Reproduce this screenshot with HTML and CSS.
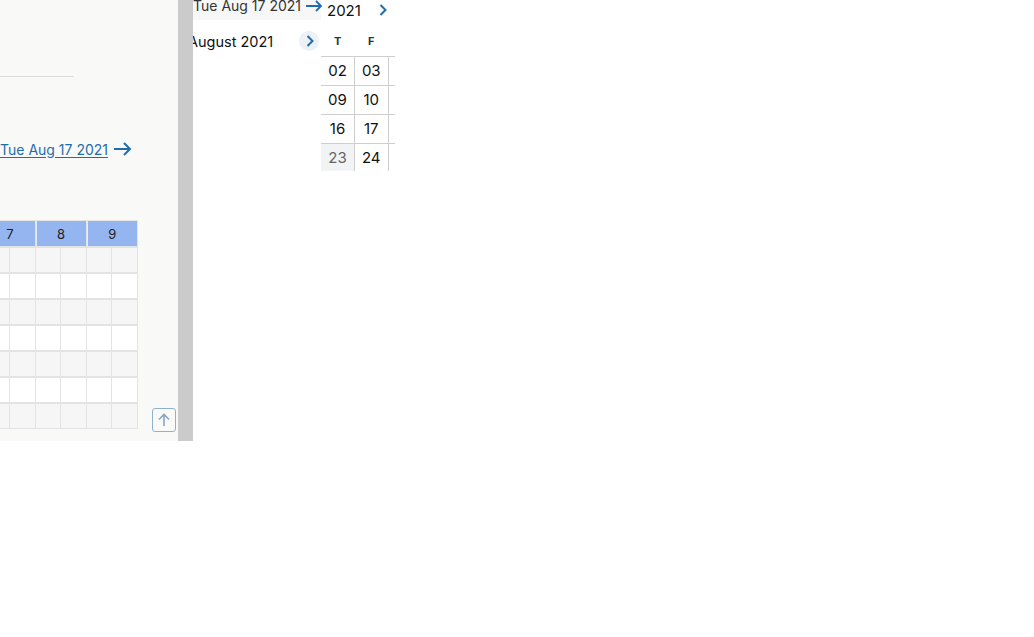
FILE: index.html
```html
<!DOCTYPE html>
<html>
<head>
<meta charset="utf-8">
<link rel="stylesheet" href="styles.css">
</head>
<body>
<div class="page">
  <div class="left">
    <div class="rule"></div>
    <div class="link-row">
      <a class="date-link" href="#">Tue Aug 17 2021</a>
      <svg class="arrow" width="19" height="16" viewBox="0 0 19 16"><path d="M1 8 H17 M11 2 L17 8 L11 14" fill="none" stroke="#1f6dac" stroke-width="2"/></svg>
    </div>
    <div class="grid-row">
      <div class="grid">
        <div class="hcell">6</div><div class="hcell">7</div><div class="hcell">8</div><div class="hcell">9</div>
        <div class="c g"></div><div class="c g"></div><div class="c g"></div><div class="c g"></div><div class="c g"></div><div class="c g"></div><div class="c g"></div><div class="c g"></div>
        <div class="c w"></div><div class="c w"></div><div class="c w"></div><div class="c w"></div><div class="c w"></div><div class="c w"></div><div class="c w"></div><div class="c w"></div>
        <div class="c g"></div><div class="c g"></div><div class="c g"></div><div class="c g"></div><div class="c g"></div><div class="c g"></div><div class="c g"></div><div class="c g"></div>
        <div class="c w"></div><div class="c w"></div><div class="c w"></div><div class="c w"></div><div class="c w"></div><div class="c w"></div><div class="c w"></div><div class="c w"></div>
        <div class="c g"></div><div class="c g"></div><div class="c g"></div><div class="c g"></div><div class="c g"></div><div class="c g"></div><div class="c g"></div><div class="c g"></div>
        <div class="c w"></div><div class="c w"></div><div class="c w"></div><div class="c w"></div><div class="c w"></div><div class="c w"></div><div class="c w"></div><div class="c w"></div>
        <div class="c g"></div><div class="c g"></div><div class="c g"></div><div class="c g"></div><div class="c g"></div><div class="c g"></div><div class="c g"></div><div class="c g"></div>
      </div>
      <button class="up" type="button">
        <svg width="16" height="16" viewBox="0 0 16 16"><path d="M8 14 V2.5 M3 7.5 L8 2.5 L13 7.5" fill="none" stroke="#84a6c6" stroke-width="1.6"/></svg>
      </button>
    </div>
  </div>
  <div class="divider"></div>
  <div class="right">
    <div class="col1">
      <div class="topbar">
        <span class="top-date">Tue Aug 17 2021</span>
        <svg class="top-arrow" width="18" height="12" viewBox="0 0 18 12"><path d="M1 6 H16 M11 1 L16 6 L11 11" fill="none" stroke="#1f6dac" stroke-width="1.8"/></svg>
      </div>
      <div class="month-row">
        <span class="month">August 2021</span>
        <span class="chev-circle"><svg width="8" height="12" viewBox="0 0 8 12"><path d="M1.5 1 L6.5 6 L1.5 11" fill="none" stroke="#1f6dac" stroke-width="2"/></svg></span>
      </div>
    </div>
    <div class="col2">
      <div class="year-row">
        <span class="year">2021</span>
        <svg class="year-chev" width="8" height="12" viewBox="0 0 8 12"><path d="M1.5 1 L6.5 6 L1.5 11" fill="none" stroke="#1f6dac" stroke-width="2"/></svg>
      </div>
      <table class="cal">
        <thead><tr><th>T</th><th>F</th><th></th></tr></thead>
        <tbody>
          <tr><td>02</td><td>03</td><td></td></tr>
          <tr><td>09</td><td>10</td><td></td></tr>
          <tr><td>16</td><td>17</td><td></td></tr>
          <tr><td class="muted">23</td><td>24</td><td></td></tr>
        </tbody>
      </table>
    </div>
  </div>
</div>
</body>
</html>
```
FILE: styles.css
```css
* { box-sizing: border-box; }
html, body { margin: 0; padding: 0; background: #fff; }
body { font-family: Inter, "Open Sans", sans-serif; color: #111; }

.page { display: flex; height: 441px; }

.left {
  width: 178px;
  background: #f9f9f7;
  overflow: hidden;
  display: flex;
  flex-direction: column;
}
.rule { margin-top: 76px; width: 74px; height: 1px; background: #dcdcdc; }

.link-row { display: flex; align-items: center; margin-top: 62px; height: 20px; }
.date-link {
  color: #1f6dac;
  font-size: 14px;
  text-decoration: underline;
  text-underline-offset: 2px;
  white-space: nowrap;
}
.arrow { margin-left: 5px; }

.grid-row { display: flex; align-items: flex-end; margin-top: 61px; }
.grid {
  width: 206px;
  margin-left: -68px;
  flex: none;
  display: grid;
  grid-template-columns: repeat(8, 1fr);
  grid-template-rows: 25px repeat(7, 24px);
  column-gap: 1px;
  row-gap: 2px;
  padding: 1px;
  background: #e3e3e3;
}
.hcell {
  grid-column: span 2;
  background: #94b5ef;
  font-size: 13px;
  color: #222;
  display: flex;
  align-items: center;
  justify-content: center;
  border-left: 1px solid #e6ecf7;
}
.c.g { background: #f6f6f6; }
.c.w { background: #ffffff; }

.up {
  width: 24px;
  height: 24px;
  margin-left: 14px;
  margin-bottom: -3px;
  padding: 0;
  border: 1px solid #8fb0ce;
  border-radius: 3px;
  background: #f9f9f7;
  display: flex;
  align-items: center;
  justify-content: center;
}

.divider { width: 15px; background: #cbcbcb; flex: none; }

.right { display: flex; overflow: hidden; align-items: flex-start; }

.col1 { width: 128px; flex: none; }
.topbar {
  height: 20px;
  background: #f7f7f7;
  display: flex;
  align-items: flex-start;
  justify-content: space-between;
}
.top-date {
  font-size: 14px;
  color: #333;
  line-height: 14px;
  margin-top: -1px;
  white-space: nowrap;
}
.top-arrow { margin-right: -2px; }

.month-row {
  display: flex;
  align-items: center;
  justify-content: space-between;
  margin-top: 11px;
  height: 20px;
  padding-right: 2px;
}
.month { font-size: 14.5px; margin-left: -5px; color: #111; white-space: nowrap; }
.chev-circle {
  width: 20px; height: 20px;
  border-radius: 50%;
  background: #edf1f5;
  display: flex; align-items: center; justify-content: center;
  padding-left: 1px;
}

.col2 { width: 74px; flex: none; overflow: hidden; }
.year-row { display: flex; align-items: center; justify-content: space-between; height: 20px; padding-left: 6px; padding-right: 8px; }
.year { font-size: 15px; color: #111; }

.cal { border-collapse: collapse; margin-top: 6px; table-layout: fixed; width: 101px; }
.cal th {
  height: 30px;
  font-size: 11px;
  font-weight: 700;
  color: #333;
  text-align: center;
  padding: 0;
  border-bottom: 1px solid #cfcfcf;
}
.cal td {
  height: 29px;
  font-size: 15px;
  text-align: center;
  padding: 0;
  border-right: 1px solid #cfcfcf;
  border-bottom: 1px solid #cfcfcf;
  color: #111;
}
.cal tr:last-child td { border-bottom: none; height: 28px; }
.cal td.muted { background: #f2f3f5; color: #666; }
```
